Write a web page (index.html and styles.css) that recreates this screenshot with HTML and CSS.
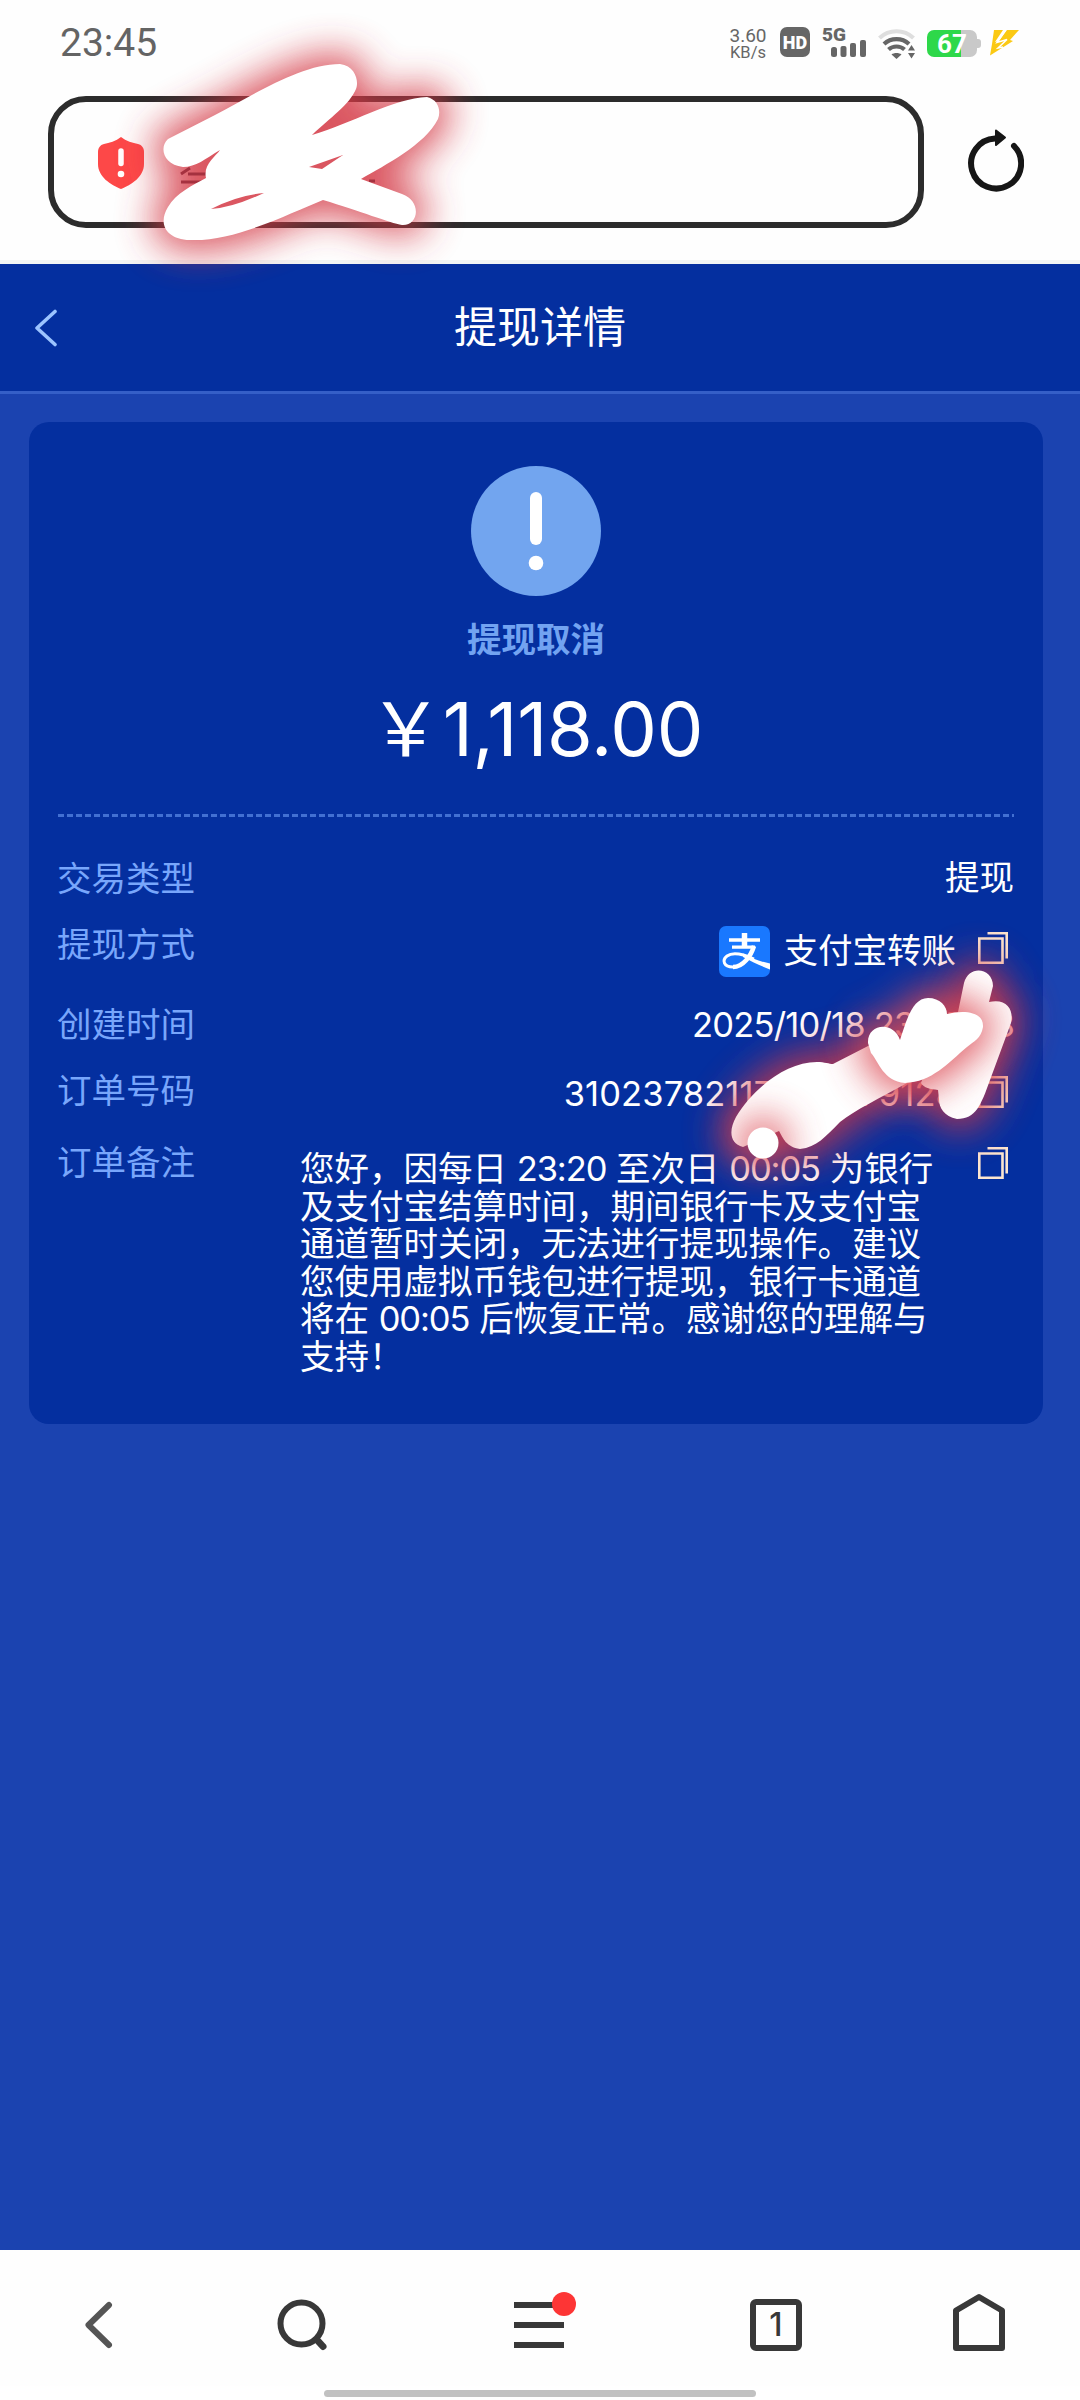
FILE: index.html
```html
<!DOCTYPE html>
<html lang="zh-CN">
<head>
<meta charset="utf-8">
<title>提现详情</title>
<link rel="stylesheet" href="styles.css">
</head>
<body>
<div class="screen">
  <header class="browser">
    <div class="status">
      <span class="clock">23:45</span>
      <div class="indicators">
        <div class="speed"><span>3.60</span><span>KB/s</span></div>
        <div class="hd">HD</div>
        <div class="signal">
          <span class="gen">5G</span>
          <svg class="bars" width="36" height="17" viewBox="0 0 36 17"><g fill="#666"><rect x="0" y="7" width="6" height="10" rx="2.5"/><rect x="9.500" y="6" width="6" height="11" rx="2"/><rect x="19" y="3" width="6" height="14" rx="2"/><rect x="29" y="0" width="6" height="17" rx="2"/></g></svg>
        </div>
        <svg class="wifi" width="38" height="30" viewBox="0 0 38 30"><g fill="none" stroke-width="4.200"><path stroke="#dedede" d="M1.500 9C11 0 26 0 35.500 9"/><path stroke="#666" d="M6 15C13 8.500 24 8.500 31 15M10.500 20.500C15 16.500 22 16.500 26.500 20.500"/></g><path fill="#666" d="M13.500 25.500C16 23.500 21 23.500 23.500 25.500L18.500 30ZM30 21.500L33.500 16L37 21.500ZM30 24L33.500 29.500L37 24Z"/></svg>
        <div class="battery"><span>67</span></div>
        <svg class="bolt" width="29" height="26" viewBox="0 0 29 26"><path fill="#fbc914" d="M4 0H13L5 12L9 11L17 0H29L20 10L23 11L0 25.500L2 14Z"/><path stroke="#fff" stroke-width="1.500" fill="none" d="M15.500 0L7 12.500L17 9.500L8 18L13 17"/></svg>
      </div>
    </div>
    <div class="toolbar">
      <div class="address">
        <svg width="46" height="52" viewBox="0 0 46 52"><path fill="#fd4848" d="M23 0C28 4 35 6 40 7C44 8 46 11 46 15V27C46 40 33 48 23 52C13 48 0 40 0 27V15C0 11 2 8 6 7C11 6 18 4 23 0Z"/><path stroke="#fff" stroke-width="5.500" stroke-linecap="round" d="M23 14V26.500"/><circle cx="23" cy="37" r="3.300" fill="#fff"/></svg>
      </div>
      <svg class="reload" width="58" height="66" viewBox="0 0 58 66"><path fill="none" stroke="#161616" stroke-width="6" stroke-linecap="round" d="M48 18A25 25 0 1 1 29 10.500"/><path fill="#161616" stroke="#161616" stroke-width="2" stroke-linejoin="round" d="M30 2.500L39 9.500L30 17Z"/></svg>
    </div>
  </header>

  <main class="page">
    <div class="titlebar">
      <svg class="back" width="24" height="38" viewBox="0 0 24 38"><path fill="none" stroke="#9cc4ff" stroke-width="3.600" stroke-linecap="round" stroke-linejoin="round" d="M21 2.500L3 19L21 35.500"/></svg>
      <h1>提现详情</h1>
    </div>
    <section class="card">
      <div class="summary">
        <svg class="alert" width="130" height="130" viewBox="0 0 130 130"><circle cx="65" cy="65" r="65" fill="#72a5ef"/><path stroke="#fff" stroke-width="12" stroke-linecap="round" d="M65 32V73"/><circle cx="65" cy="97" r="7.300" fill="#fff"/></svg>
        <div class="state">提现取消</div>
        <div class="amount"><span class="yen">￥</span>1,118.00</div>
      </div>
      <div class="divider"></div>
      <dl class="details">
        <div class="row type"><dt>交易类型</dt><dd>提现</dd></div>
        <div class="row method"><dt>提现方式</dt><dd>
          <svg class="alipay" width="51" height="51" viewBox="0 0 51 51"><rect width="51" height="51" rx="7" fill="#1978ff"/><g fill="none" stroke="#fff"><path stroke-width="3.300" d="M10 14H41M13 21.200H36"/><path stroke-width="5.500" d="M25.500 7V21"/><path stroke-width="4.500" d="M35 20C32 30 24 41 14 41"/><path stroke-width="3" d="M15 41C4 41.500 3 34 8 30C14 25.500 24 28 35 33"/></g><path fill="#fff" d="M24 27.500C32 32 42 36 51 37.500V43.500C43 40.500 32 35.500 24 31Z"/></svg>
          <span class="name">支付宝转账</span>
          <svg class="copy" width="30" height="32" viewBox="0 0 30 32"><path d="M1.300 6.500H24.500V30.700H1.300ZM9.500 1.300H28.700V26.500"/></svg>
        </dd></div>
        <div class="row created"><dt>创建时间</dt><dd><span class="digits">2025/10/18 23:25:28</span></dd></div>
        <div class="row number"><dt>订单号码</dt><dd><span>31023782117000079128</span>
          <svg class="copy" width="30" height="32" viewBox="0 0 30 32"><path d="M1.300 6.500H24.500V30.700H1.300ZM9.500 1.300H28.700V26.500"/></svg>
        </dd></div>
        <div class="row note"><dt>订单备注</dt><dd>
          <p>您好，因每日 <b>23:20</b> 至次日 <b>00:05</b> 为银行<br>及支付宝结算时间，期间银行卡及支付宝<br>通道暂时关闭，无法进行提现操作。建议<br>您使用虚拟币钱包进行提现，银行卡通道<br>将在 <b>00:05</b> 后恢复正常。感谢您的理解与<br>支持！</p>
          <svg class="copy" width="30" height="32" viewBox="0 0 30 32"><path d="M1.300 6.500H24.500V30.700H1.300ZM9.500 1.300H28.700V26.500"/></svg>
        </dd></div>
      </dl>
    </section>
  </main>

  <nav class="navbar">
    <svg width="32" height="48" viewBox="0 0 32 48"><path fill="none" stroke="#555" stroke-width="6" stroke-linecap="round" stroke-linejoin="round" d="M25 4L4.500 24L25 44"/></svg>
    <svg width="54" height="54" viewBox="0 0 54 54"><g fill="none" stroke="#383838"><circle cx="25.500" cy="25.500" r="21" stroke-width="6"/><path stroke-width="7" stroke-linecap="round" d="M42 43L47 48.500"/></g></svg>
    <svg width="64" height="62" viewBox="0 0 64 62"><path stroke="#383838" stroke-width="6" d="M0 14H50M0 34H50M0 54H50"/><circle cx="50" cy="13" r="12" fill="#fd3535"/></svg>
    <div class="tabs">1</div>
    <svg width="54" height="60" viewBox="0 0 54 60"><path fill="none" stroke="#383838" stroke-width="6" stroke-linejoin="round" d="M4 18.500L27 5L50 18.500V56H4Z"/></svg>
  </nav>
  <div class="handle"></div>

  <svg class="scribbles" width="1080" height="2400" viewBox="0 0 1080 2400">
    <defs>
      <filter id="soft" filterUnits="userSpaceOnUse" x="0" y="0" width="1080" height="1300"><feGaussianBlur stdDeviation="19"/></filter>
      <path id="s1" fill-rule="evenodd" d="M168 139L215 115C250 97 300 64 340 64C356 66 359 82 356 89C350 104 330 118 312 135C350 124 395 98 427 97C439 100 441 111 438 119C425 145 385 165 361 179L402 194C422 201 419 226 402 225C390 223 360 211 323 200C290 213 235 242 190 240C165 239 158 223 168 207C176 193 193 185 206 178C203 165 215 157 220 150C205 159 196 167 183 167C163 165 159 147 168 139ZM211 209Q232 208 264 193Q238 195 211 209ZM309 167L343 155L322 169Z"/>
      <path id="band" d="M743 1147C729 1143 729 1130 736 1117C752 1090 785 1062 817 1062C825 1062 829 1064 833 1064L870 1045L907 1083C880 1098 855 1110 840 1122C825 1137 817 1147 800 1149C786 1147 783 1138 779 1131Z"/>
      <path id="hook" d="M958 1012L964 983C969 964 993 968 993 986L989 1002C1007 998 1014 1010 1011 1023L990 1080C981 1105 976 1119 957 1119C944 1116 939 1108 939 1099L938 1090C930 1089 924 1088 921 1083L940 1030Z"/>
      <path id="heart" d="M868 1043C867 1024 893 1020 900 1040C906 1022 912 998 928 998C940 998 947 1006 947 1014C963 1010 984 1011 983 1027C981 1039 974 1041 967 1047C948 1063 932 1082 905 1083C883 1081 879 1062 871 1053Z"/>
    </defs>
    <g class="glow"><use href="#s1"/></g>
    <path fill="none" stroke="#a5313f" stroke-width="3" d="M181 174L190 168M188 174H206M181 182H206M369 181H375"/>
    <use href="#s1" fill="#fff"/>
    <g class="glow"><use href="#band"/><use href="#hook"/></g>
    <use href="#band" fill="#fff"/><use href="#hook" fill="#fff"/>
    <g class="glow inner"><use href="#heart"/><circle cx="763" cy="1143" r="15"/></g>
    <use href="#heart" fill="#fff"/><circle cx="763" cy="1143" r="15.500" fill="#fff"/>
  </svg>
</div>
</body>
</html>
```
FILE: styles.css
```css
* { box-sizing: border-box; }
body { margin: 0; background: #fff; font-family: Inter, "Noto Sans CJK SC", sans-serif; }
svg { display: block; flex: none; }
.screen { position: relative; width: 1080px; height: 2400px; display: flex; flex-direction: column; overflow: hidden; }
.browser { height: 264px; border-bottom: 4px solid #f1f5f4; background: #fefefe; }
.status { height: 96px; padding: 20px 61px 0 60px; display: flex; justify-content: space-between; align-items: flex-start; }
.clock { font: 39px/46px Roboto, sans-serif; color: #646464; }
.indicators { display: flex; align-items: flex-start; color: #666; padding-top: 7px; }
.speed { width: 38px; margin-right: 13px; display: flex; flex-direction: column; align-items: center; font: 19px/17px Roboto, sans-serif; }
.speed span:last-child { font-size: 16.5px; }
.speed span { white-space: nowrap; }
.hd { width: 30px; height: 30px; margin-right: 12px; border-radius: 7px; background: #666; color: #fff; font: 900 18px/31px Roboto, sans-serif; text-align: center; }
.signal { width: 45px; height: 30px; margin-right: 11px; display: flex; flex-direction: column; }
.gen { font: 900 19px/16px Roboto, sans-serif; height: 13px; }
.bars { align-self: flex-end; }
.wifi { margin: 2px 11px 0 0; }
.battery { width: 50px; height: 27px; margin: 3px 13px 0 0; border-radius: 7px; background: linear-gradient(90deg, #2ed84a 68%, #c9c9c9 68%); color: #fff; font: bold 26px/28px Roboto, sans-serif; text-align: center; position: relative; }
.battery::after { content: ""; position: absolute; left: 50px; top: 9px; width: 4px; height: 9px; border-radius: 0 3px 3px 0; background: #c9c9c9; }
.bolt { margin-top: 3px; }
.toolbar { display: flex; padding: 0 48px; }
.address { width: 876px; height: 132px; border: 6px solid #2c2c2c; border-radius: 38px; padding: 35px 44px; margin-right: 42px; }
.reload { margin-top: 32px; }
.page { height: 1986px; background: #1b43b0; }
.titlebar { height: 130px; background: #042f9f; border-bottom: 3px solid #355fc7; display: grid; grid-template-columns: 200px 1fr 200px; align-items: center; }
.back { margin-left: 34px; }
h1 { margin: -7px 0 0; font: 400 43px/60px "Noto Sans CJK SC", sans-serif; color: #fff; text-align: center; }
.card { width: 1014px; height: 1002px; margin: 28px 0 0 29px; padding: 44px 29px 0; border-radius: 20px; background: #042f9f; }
.summary { display: flex; flex-direction: column; align-items: center; height: 348px; }
.state { margin-top: 16px; font: 700 34.5px/50px "Noto Sans CJK SC", sans-serif; color: #72a3f1; }
.amount { margin-top: 22px; font-size: 74px; line-height: 90px; color: #fff; letter-spacing: -0.2px; white-space: nowrap; }
.yen { font-family: "Noto Sans CJK SC", sans-serif; line-height: 1; }
.divider { height: 3px; background: repeating-linear-gradient(90deg, #4270d2 0 6px, transparent 6px 9px); }
.details { margin: 38px 0 0; font-size: 34.5px; line-height: 45px; color: #fff; }
.row { display: flex; justify-content: space-between; align-items: flex-start; }
dt { margin: -1px 0 0 -1px; font-family: "Noto Sans CJK SC", sans-serif; color: #78a6fb; }
dd { margin: 0; display: flex; }
.type { height: 66px; }
.method { height: 80px; }
.created { height: 66px; }
.number { height: 72px; }
.copy { margin: 0 6px 0 21px; fill: none; stroke: #fce6d0; stroke-width: 2.6; }
.method .copy { margin-top: 11px; }
.number .copy { margin-top: 9px; }
.note .copy { margin: 8px 6px 0 0; }
.alipay { margin-top: 5px; }
.name { margin: 7px 1px 0 14px; }
.digits { letter-spacing: -0.8px; }
.created span { margin-top: 1px; }
.number span { margin-top: 4px; letter-spacing: 0.1px; }
.note dd { width: 714px; justify-content: space-between; }
.note p { margin: 11px 0 0; font-size: 34.5px; line-height: 37.5px; white-space: nowrap; }
.note b { font-weight: 400; letter-spacing: -1.1px; }
.navbar { height: 136px; padding: 38px 72px 0 84px; display: grid; grid-template-columns: 192px 238px 236px 202px 56px; align-items: start; background: #fefefe; }
.navbar > :nth-child(1) { margin-top: 13px; }
.navbar > :nth-child(2) { margin-top: 10px; }
.navbar > :nth-child(3) { margin-top: 3px; }
.navbar > :nth-child(5) { margin-top: 4px; }
.tabs { width: 52px; height: 52px; margin-top: 11px; border: 6px solid #383838; border-radius: 6px; font: 500 32px/40px Inter, sans-serif; color: #383838; text-align: center; }
.handle { width: 432px; height: 7px; margin: 4px 0 0 324px; border-radius: 4px; background: #c1c1c1; }
.scribbles { position: absolute; left: 0; top: 0; pointer-events: none; }
.glow { fill: #d43844; stroke: #d43844; stroke-width: 22px; filter: url(#soft); opacity: .85; }
.inner { fill: #dc4a52; stroke: #dc4a52; }
```
